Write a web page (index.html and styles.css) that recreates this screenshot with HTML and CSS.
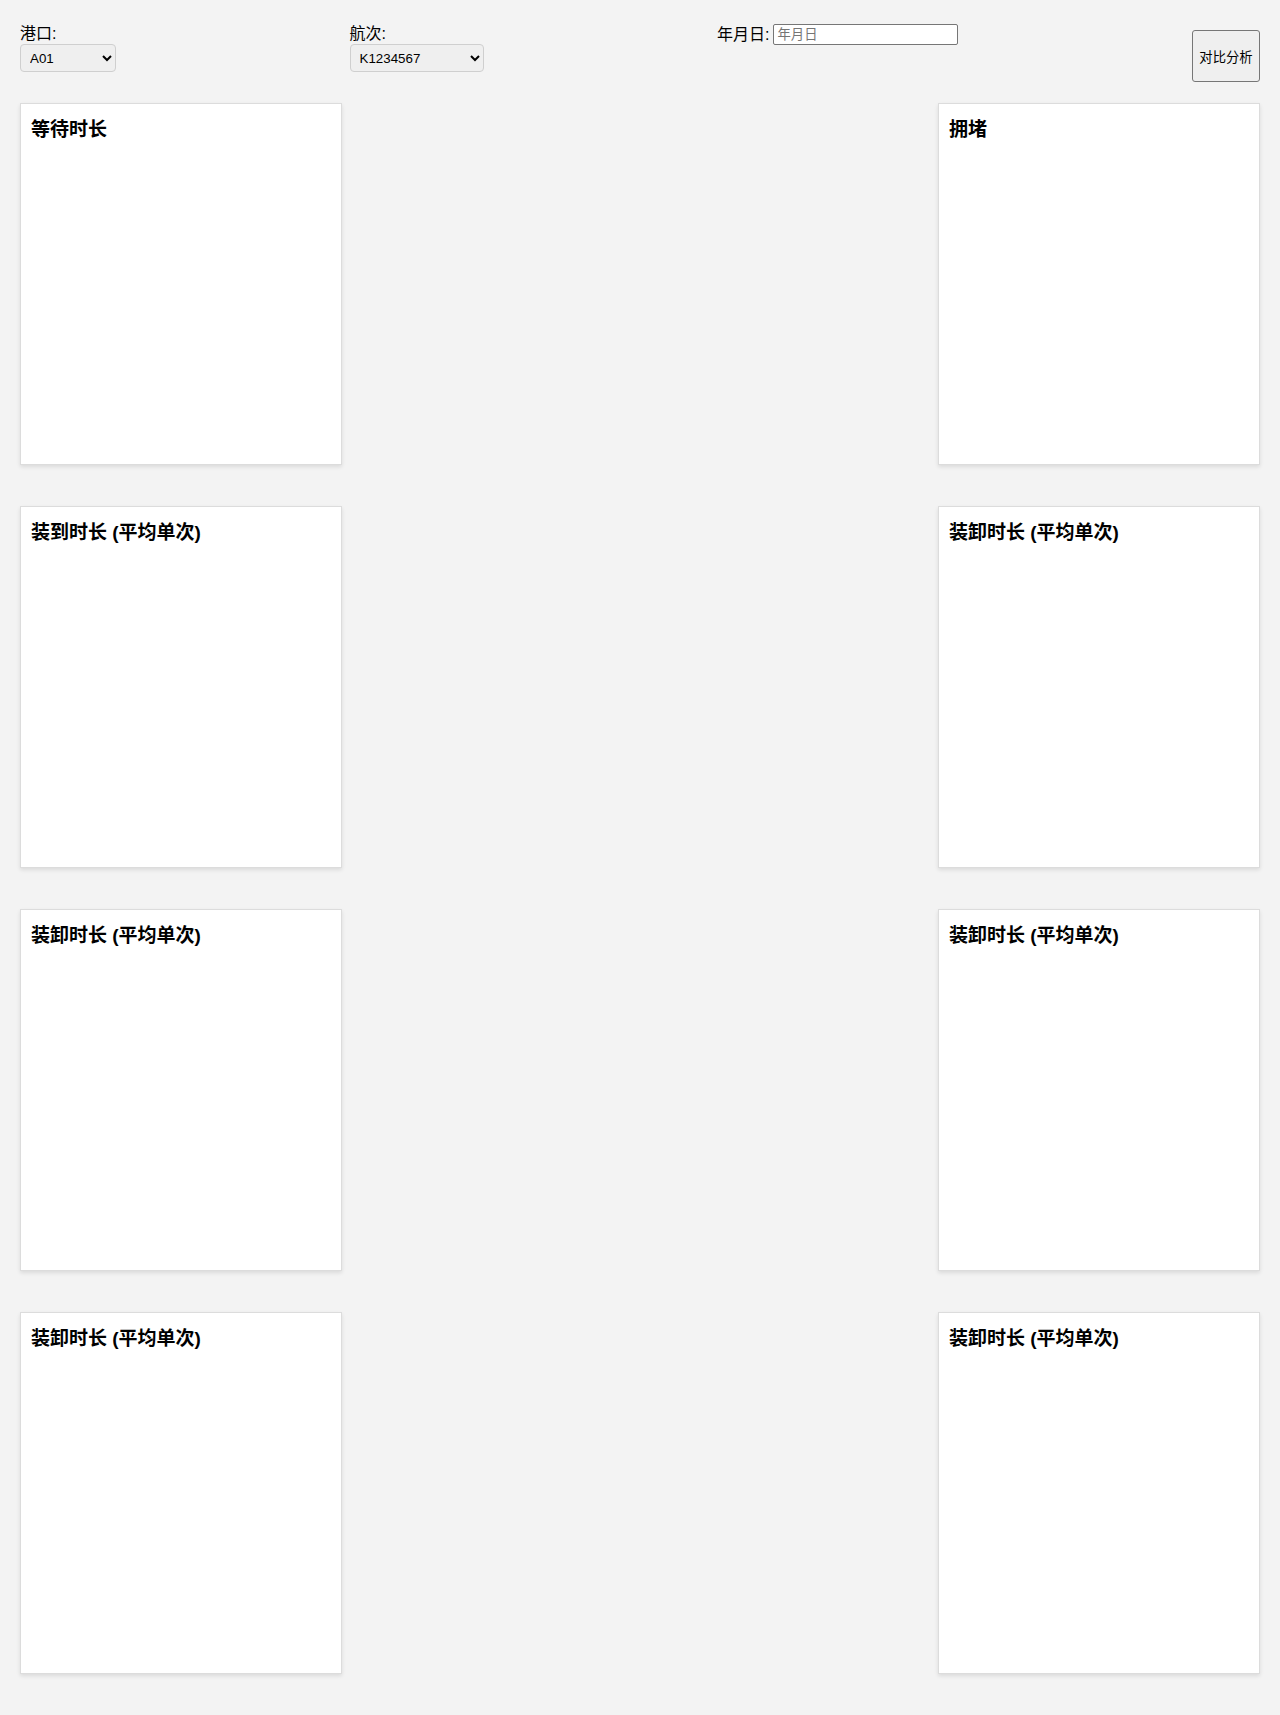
FILE: index.html
```html
<!DOCTYPE html>
<html lang="zh-CN">
<head>
<meta charset="UTF-8">
<title>对比分析</title>
<link rel="stylesheet" href="styles.css">
</head>
<body>
<div class="page">
  <div class="toolbar">
    <div class="field field-stack">
      <label class="field-label" for="port">港口:</label>
      <select id="port" class="select select-port">
        <option>A01</option>
      </select>
    </div>
    <div class="field field-stack">
      <label class="field-label" for="voyage">航次:</label>
      <select id="voyage" class="select select-voyage">
        <option>K1234567</option>
      </select>
    </div>
    <div class="field field-inline">
      <label class="field-label" for="date">年月日:</label>
      <input id="date" class="date-input" type="text" placeholder="年月日">
    </div>
    <button class="compare-btn" type="button">对比分析</button>
  </div>

  <div class="cards">
    <div class="card"><h3 class="card-title">等待时长</h3></div>
    <div class="card"><h3 class="card-title">拥堵</h3></div>
    <div class="card"><h3 class="card-title">装到时长 (平均单次)</h3></div>
    <div class="card"><h3 class="card-title">装卸时长 (平均单次)</h3></div>
    <div class="card"><h3 class="card-title">装卸时长 (平均单次)</h3></div>
    <div class="card"><h3 class="card-title">装卸时长 (平均单次)</h3></div>
    <div class="card"><h3 class="card-title">装卸时长 (平均单次)</h3></div>
    <div class="card"><h3 class="card-title">装卸时长 (平均单次)</h3></div>
  </div>
</div>
</body>
</html>
```

FILE: styles.css
```css
html {
  background: #f3f3f3;
}

body {
  margin: 0;
  font-family: "Liberation Sans", "Noto Sans CJK SC", sans-serif;
  font-size: 16px;
  color: #000;
}

.page {
  padding: 20px 20px 41px;
}

.toolbar {
  display: flex;
  justify-content: space-between;
  align-items: flex-start;
  margin-bottom: 21px;
}

.field-stack .field-label {
  display: block;
  padding-top: 3px;
  line-height: 21px;
}

.field-inline {
  display: flex;
  align-items: center;
  gap: 4px;
  padding-top: 4px;
}

.field-inline .field-label {
  line-height: 21px;
}

.select {
  box-sizing: border-box;
  height: 28px;
  padding: 4px 5px;
  border: 1px solid #cfcfcf;
  border-radius: 4px;
  background-color: #efefef;
  font-family: "Liberation Sans", "Noto Sans CJK SC", sans-serif;
  font-size: 13.33px;
  color: #000;
}

.select-port {
  width: 96px;
}

.select-voyage {
  width: 134px;
}

.date-input {
  box-sizing: border-box;
  width: 185px;
  height: 21px;
  padding: 1px 3px;
  border: 1px solid #767676;
  border-radius: 2px;
  background: #fff;
  font-family: "Liberation Sans", "Noto Sans CJK SC", sans-serif;
  font-size: 13.33px;
}

.date-input::placeholder {
  color: #757575;
}

.compare-btn {
  box-sizing: border-box;
  margin-top: 10px;
  width: 68px;
  height: 52px;
  padding: 0 6px;
  border: 1px solid #767676;
  border-radius: 3px;
  background: #efefef;
  font-family: "Liberation Sans", "Noto Sans CJK SC", sans-serif;
  font-size: 13.33px;
  color: #000;
}

.cards {
  display: grid;
  grid-template-columns: 322px 322px;
  justify-content: space-between;
  row-gap: 41px;
}

.card {
  box-sizing: border-box;
  height: 362px;
  padding: 10px 10px 10px;
  background: #fff;
  border: 1px solid #dcdcdc;
  box-shadow: 0 2px 4px rgba(0, 0, 0, 0.1);
}

.card-title {
  margin: 0;
  font-size: 19px;
  font-weight: bold;
}
```
